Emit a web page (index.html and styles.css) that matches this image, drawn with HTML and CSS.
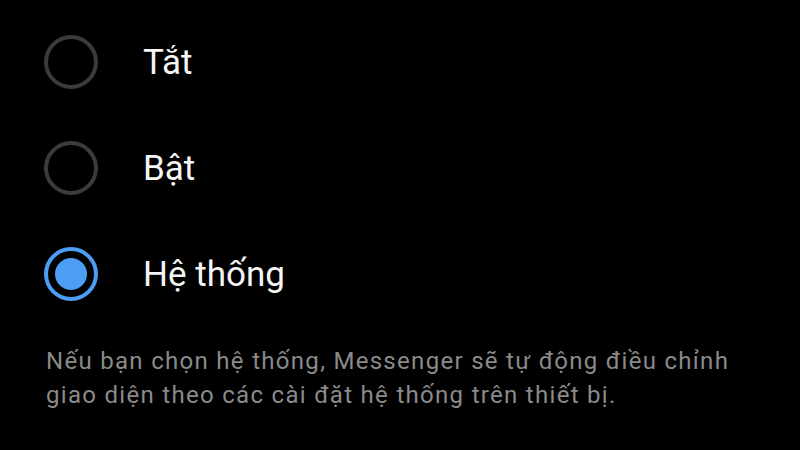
FILE: index.html
```html
<!DOCTYPE html>
<html lang="vi">
<head>
<meta charset="utf-8">
<link rel="stylesheet" href="styles.css">
</head>
<body>
<div class="screen">
  <div class="options">
    <div class="option">
      <span class="radio"></span>
      <span class="label">Tắt</span>
    </div>
    <div class="option">
      <span class="radio"></span>
      <span class="label">Bật</span>
    </div>
    <div class="option">
      <span class="radio checked"></span>
      <span class="label">Hệ thống</span>
    </div>
  </div>
  <p class="note">Nếu bạn chọn hệ thống, Messenger sẽ tự động điều chỉnh giao diện theo các cài đặt hệ thống trên thiết bị.</p>
</div>
</body>
</html>
```
FILE: styles.css
```css
html, body {
  margin: 0;
  padding: 0;
  background: #000;
}
.screen {
  width: 800px;
  height: 450px;
  background: #000;
  font-family: Roboto, "Noto Sans", sans-serif;
  overflow: hidden;
}
.options {
  display: flex;
  flex-direction: column;
  padding-top: 9px;
}
.option {
  display: flex;
  align-items: center;
  height: 106px;
  padding-left: 44px;
}
.radio {
  box-sizing: border-box;
  width: 54px;
  height: 54px;
  border: 4px solid #3b3b3b;
  border-radius: 50%;
  display: flex;
  align-items: center;
  justify-content: center;
  flex-shrink: 0;
}
.radio.checked {
  border-color: #4c9df4;
}
.radio.checked::after {
  content: "";
  width: 32px;
  height: 32px;
  border-radius: 50%;
  background: #4c9df4;
}
.label {
  margin-left: 45px;
  color: #f5f5f5;
  font-size: 35px;
  line-height: 1;
}
.note {
  margin: 17px 0 0 46px;
  width: 740px;
  color: #8a8a8a;
  font-size: 24px;
  letter-spacing: 1.3px;
  line-height: 34px;
}
```
